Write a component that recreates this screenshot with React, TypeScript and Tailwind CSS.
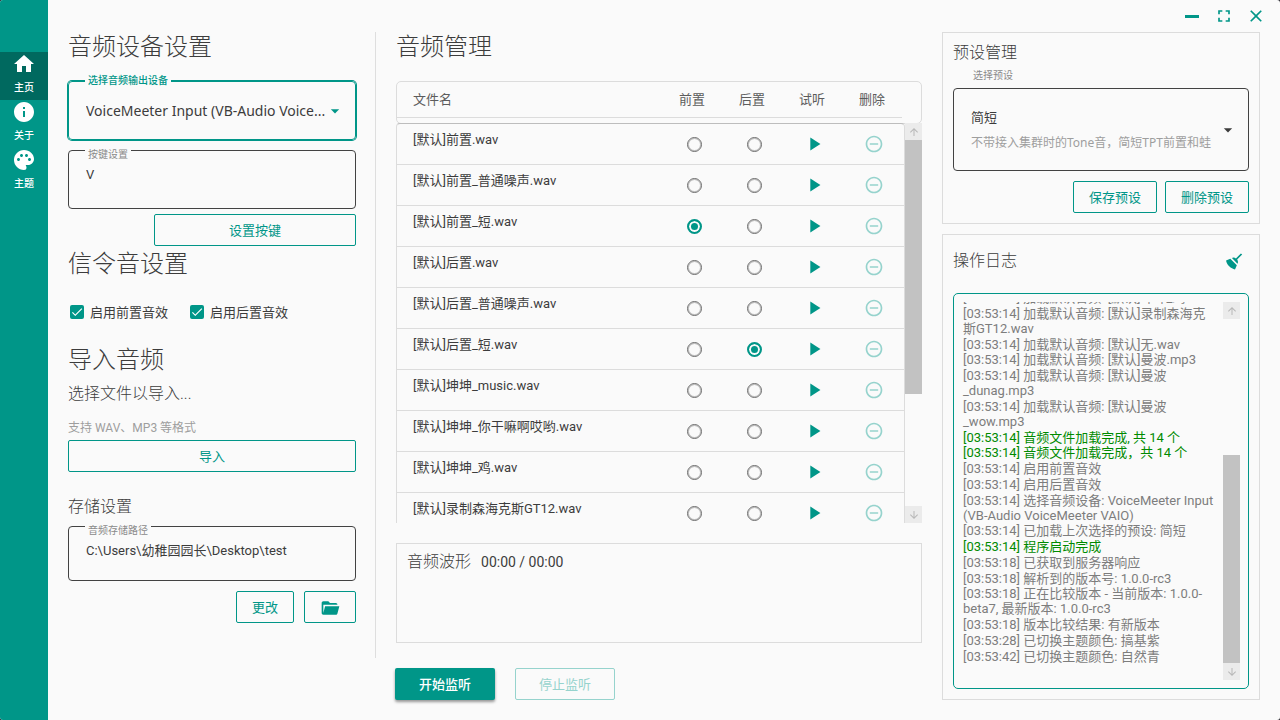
import React, { useState } from 'react';
import { MdArrowDropDown, MdArrowUpward, MdArrowDownward, MdCheck, MdClose, MdFullscreen, MdHome, MdInfo, MdPalette, MdPlayArrow, MdRemoveCircleOutline } from 'react-icons/md';

const navItems = [
  { id: 'home', label: '主页', icon: MdHome },
  { id: 'about', label: '关于', icon: MdInfo },
  { id: 'theme', label: '主题', icon: MdPalette },
];

const audioFiles = [
  '[默认]前置.wav',
  '[默认]前置_普通噪声.wav',
  '[默认]前置_短.wav',
  '[默认]后置.wav',
  '[默认]后置_普通噪声.wav',
  '[默认]后置_短.wav',
  '[默认]坤坤_music.wav',
  '[默认]坤坤_你干嘛啊哎哟.wav',
  '[默认]坤坤_鸡.wav',
  '[默认]录制森海克斯GT12.wav',
];

const logs = [
  { time: '03:53:14', text: '加载默认音频: [默认]坤坤_鸡.wav' },
  { time: '03:53:14', text: '加载默认音频: [默认]录制森海克斯GT12.wav' },
  { time: '03:53:14', text: '加载默认音频: [默认]无.wav' },
  { time: '03:53:14', text: '加载默认音频: [默认]曼波.mp3' },
  { time: '03:53:14', text: '加载默认音频: [默认]曼波 _dunag.mp3' },
  { time: '03:53:14', text: '加载默认音频: [默认]曼波 _wow.mp3' },
  { time: '03:53:14', text: '音频文件加载完成, 共 14 个', success: true },
  { time: '03:53:14', text: '音频文件加载完成，共 14 个', success: true },
  { time: '03:53:14', text: '启用前置音效' },
  { time: '03:53:14', text: '启用后置音效' },
  { time: '03:53:14', text: '选择音频设备: VoiceMeeter Input (VB-Audio VoiceMeeter VAIO)' },
  { time: '03:53:14', text: '已加载上次选择的预设: 简短' },
  { time: '03:53:14', text: '程序启动完成', success: true },
  { time: '03:53:18', text: '已获取到服务器响应' },
  { time: '03:53:18', text: '解析到的版本号: 1.0.0-rc3' },
  { time: '03:53:18', text: '正在比较版本 - 当前版本: 1.0.0-beta7, 最新版本: 1.0.0-rc3' },
  { time: '03:53:18', text: '版本比较结果: 有新版本' },
  { time: '03:53:28', text: '已切换主题颜色: 搞基紫' },
  { time: '03:53:42', text: '已切换主题颜色: 自然青' },
];

const outlineButton = 'flex h-8 items-center justify-center rounded-[2px] border border-[#009688] pt-[2px] text-[13px] text-[#009688]';

function SectionTitle({ children }: { children: React.ReactNode }) {
  return <h2 className="text-2xl leading-[30px] font-light">{children}</h2>;
}

// label that sits on the outline of a field
function FloatingLabel({ htmlFor, className, children }: { htmlFor: string; className: string; children: React.ReactNode }) {
  return (
    <label htmlFor={htmlFor} className={`absolute left-4 bg-[#fafafa] px-[3px] text-[10px] leading-3 ${className}`}>
      {children}
    </label>
  );
}

function Scrollbar({ before, thumb }: { before: string; thumb: string }) {
  return (
    <div className="flex w-[17px] shrink-0 flex-col">
      <button type="button" aria-label="向上滚动" className="flex h-[17px] shrink-0 items-center justify-center bg-[#ebebeb] text-[#b8b8b8]">
        <MdArrowUpward className="size-3" />
      </button>
      <div className={before} />
      <div className={`bg-[#c2c2c2] ${thumb}`} />
      <div className="flex-1" />
      <button type="button" aria-label="向下滚动" className="flex h-[17px] shrink-0 items-center justify-center bg-[#ebebeb] text-[#b8b8b8]">
        <MdArrowDownward className="size-3" />
      </button>
    </div>
  );
}

function Sidebar() {
  return (
    <nav className="w-12 shrink-0 bg-[#009688] pt-[52px]">
      {navItems.map(({ id, label, icon: Icon }) => (
        <button
          key={id}
          type="button"
          className={`flex h-12 w-full flex-col items-center justify-between pb-1 text-[10px] leading-4 font-medium text-white ${id === 'home' ? 'bg-[#00695f]' : ''}`}
        >
          <Icon className="size-6" />
          {label}
        </button>
      ))}
    </nav>
  );
}

function TickBox({ label }: { label: string }) {
  const [on, setOn] = useState(true);
  return (
    <label className="flex w-[120px] items-center gap-[6px] text-[13px] leading-5">
      <span className="grid size-[14px] place-items-center">
        <input
          type="checkbox"
          checked={on}
          onChange={() => setOn(!on)}
          className="col-start-1 row-start-1 size-[14px] appearance-none rounded-[2px] border-2 border-[#757575] checked:border-[#009688] checked:bg-[#009688]"
        />
        {on && <MdCheck className="pointer-events-none col-start-1 row-start-1 size-[14px] text-white" />}
      </span>
      <span className="pt-[3px]">{label}</span>
    </label>
  );
}

function SettingsColumn() {
  return (
    <section className="flex h-[626px] w-[308px] shrink-0 flex-col border-r border-[#dedede] pr-[19px]">
      <SectionTitle>音频设备设置</SectionTitle>

      <div className="relative mt-[19px] grid h-[59px] items-center rounded-[4px] border border-[#009688] ring-1 ring-[#009688]">
        <FloatingLabel htmlFor="device" className="-top-[7px] font-medium text-[#009688]">选择音频输出设备</FloatingLabel>
        <select id="device" className="col-start-1 row-start-1 h-full w-full appearance-none bg-transparent pr-6 pl-[17px] font-['Noto_Sans','Noto_Sans_CJK_SC',sans-serif] text-sm outline-none">
          <option>VoiceMeeter Input (VB-Audio Voice...</option>
        </select>
        <MdArrowDropDown className="pointer-events-none col-start-1 row-start-1 mr-[10px] size-5 justify-self-end text-[#009688]" />
      </div>

      <div className="relative mt-[10px] h-[59px] rounded-[4px] border border-[#424242]">
        <FloatingLabel htmlFor="hotkey" className="-top-[2px] text-[#8a8a8a]">按键设置</FloatingLabel>
        <input id="hotkey" defaultValue="V" className="h-[47px] w-full bg-transparent px-[17px] text-[13px] outline-none" />
      </div>
      <button type="button" className={`${outlineButton} mt-[5px] w-[202px] self-end`}>设置按键</button>

      <div className="mt-[3px]">
        <SectionTitle>信令音设置</SectionTitle>
      </div>
      <div className="mt-[21px] flex pl-[2px]">
        <TickBox label="启用前置音效" />
        <TickBox label="启用后置音效" />
      </div>

      <div className="mt-[22px]">
        <SectionTitle>导入音频</SectionTitle>
      </div>
      <p className="mt-[7px] leading-6 font-light">选择文件以导入...</p>
      <p className="mt-[14px] text-xs text-[#9e9e9e]">支持 WAV、MP3 等格式</p>
      <button type="button" className={`${outlineButton} mt-1`}>导入</button>

      <h3 className="mt-[23px] leading-6 font-light">存储设置</h3>
      <div className="relative mt-[7px] h-[55px] rounded-[4px] border border-[#424242]">
        <FloatingLabel htmlFor="path" className="-top-[2px] text-[#8a8a8a]">音频存储路径</FloatingLabel>
        <input id="path" defaultValue="C:\Users\幼稚园园长\Desktop\test" className="h-[45px] w-full bg-transparent px-[17px] text-[13px] outline-none" />
      </div>
      <div className="mt-[10px] flex justify-end gap-[10px]">
        <button type="button" className={`${outlineButton} w-[58px]`}>更改</button>
        <button type="button" aria-label="打开文件夹" className={`${outlineButton} w-[52px]`}>
          <svg viewBox="0 0 24 24" className="size-5" fill="currentColor">
            <path d="M19,20H4C2.89,20 2,19.1 2,18V6C2,4.89 2.89,4 4,4H10L12,6H19A2,2 0 0,1 21,8H21L4,8V18L6.14,10H23.21L20.93,18.5C20.7,19.37 19.92,20 19,20Z" />
          </svg>
        </button>
      </div>
    </section>
  );
}

function AudioTable() {
  const [prefix, setPrefix] = useState(2);
  const [suffix, setSuffix] = useState(5);
  const radio = 'size-[15px] appearance-none rounded-full border border-[#6b6b6b] shadow-[inset_0_0_0_1px_#bdbdbd] checked:border-2 checked:border-[#009688] checked:bg-[#009688] checked:shadow-[inset_0_0_0_2px_#fafafa]';
  const cols = 'grid grid-cols-[1fr_60px_60px_60px_60px]';

  return (
    <div className="mt-[19px]">
      <table className="block">
        <thead className="block h-[43px] rounded-[5px] border border-[#dcdcdc]">
          <tr className={`${cols} mr-[19px] h-9 items-center border-b border-[#dcdcdc] text-[13px] text-[#5c5c5c]`}>
            <th className="pl-4 text-left font-normal">文件名</th>
            <th className="font-normal">前置</th>
            <th className="font-normal">后置</th>
            <th className="font-normal">试听</th>
            <th className="font-normal">删除</th>
          </tr>
        </thead>
        <tbody className="-mt-px grid h-[400px] grid-cols-[1fr_17px] overflow-hidden">
          <tr className="contents">
            <td className="h-[400px] overflow-hidden p-0">
              <table className="block rounded-t-[4px] border border-[#dcdcdc] border-t-[#bdbdbd]">
                <tbody className="block">
                  {audioFiles.map((name, i) => (
                    <tr key={name} className={`${cols} h-[41px] border-b border-[#dcdcdc] text-[13px]`}>
                      <td className="pt-[6px] pl-4 leading-5">{name}</td>
                      <td className="flex items-center justify-center">
                        <input type="radio" name="prefix" aria-label={`${name} 前置`} checked={prefix === i} onChange={() => setPrefix(i)} className={radio} />
                      </td>
                      <td className="flex items-center justify-center">
                        <input type="radio" name="suffix" aria-label={`${name} 后置`} checked={suffix === i} onChange={() => setSuffix(i)} className={radio} />
                      </td>
                      <td className="flex items-center justify-center">
                        <button type="button" aria-label="试听" className="text-[#009688]">
                          <MdPlayArrow className="size-[22px]" />
                        </button>
                      </td>
                      <td className="flex items-center justify-center">
                        <button type="button" aria-label="删除" className="text-[#96d3cd]">
                          <MdRemoveCircleOutline className="size-5" />
                        </button>
                      </td>
                    </tr>
                  ))}
                </tbody>
              </table>
            </td>
            <td className="flex p-0">
              <Scrollbar before="h-0" thumb="h-[254px]" />
            </td>
          </tr>
        </tbody>
      </table>
    </div>
  );
}

function AudioColumn() {
  return (
    <section className="min-w-0 flex-1">
      <SectionTitle>音频管理</SectionTitle>
      <AudioTable />
      <div className="mt-5 flex h-[100px] items-start gap-[10px] border border-[#dcdcdc] px-[10px] pt-[6px]">
        <h3 className="leading-6 font-light">音频波形</h3>
        <span className="text-sm leading-6">00:00 / 00:00</span>
      </div>
      <div className="mt-[25px] flex gap-5">
        <button type="button" className="-ml-px h-8 w-[100px] rounded-[2px] bg-[#009688] pt-[2px] text-[13px] font-medium text-white shadow-[0_2px_3px_rgba(0,0,0,0.4)]">开始监听</button>
        <button type="button" disabled className="h-8 w-[100px] rounded-[2px] border border-[#96d3cd] pt-[2px] text-[13px] text-[#96d3cd]">停止监听</button>
      </div>
    </section>
  );
}

function PresetCard() {
  return (
    <section className="border border-[#dcdcdc] px-[10px] pt-2 pb-[10px]">
      <h3 className="leading-6 font-light">预设管理</h3>
      <label htmlFor="preset" className="ml-5 block text-[10px] leading-[22px] text-[#8a8a8a]">选择预设</label>
      <div className="mt-px grid h-[83px] rounded-[4px] border border-[#424242]">
        <select id="preset" className="col-start-1 row-start-1 h-full w-full appearance-none bg-transparent pr-9 pb-6 pl-[17px] text-[13px] outline-none">
          <option>简短</option>
        </select>
        <p className="pointer-events-none col-start-1 row-start-1 mr-[34px] ml-[17px] self-end overflow-hidden pb-[17px] font-['Noto_Sans','Noto_Sans_CJK_SC',sans-serif] text-xs leading-5 whitespace-nowrap text-[#9e9e9e]">
          不带接入集群时的Tone音，简短TPT前置和蛙
        </p>
        <MdArrowDropDown className="pointer-events-none col-start-1 row-start-1 mr-[10px] size-5 self-center justify-self-end" />
      </div>
      <div className="mt-[10px] flex justify-end gap-2">
        <button type="button" className={`${outlineButton} w-[84px]`}>保存预设</button>
        <button type="button" className={`${outlineButton} w-[84px]`}>删除预设</button>
      </div>
    </section>
  );
}

function LogCard() {
  return (
    <section className="mt-[10px] flex flex-1 flex-col border border-[#dcdcdc] p-[10px]">
      <div className="flex h-8 items-center justify-between pr-1">
        <h3 className="leading-6 font-light">操作日志</h3>
        <button type="button" aria-label="清空日志" className="text-[#009688]">
          <svg viewBox="0 0 24 24" className="size-[21px]" fill="currentColor">
            <path d="M19.36,2.72L20.78,4.14L15.06,9.85C16.13,11.39 16.28,13.24 15.38,14.44L9.06,8.12C10.26,7.22 12.11,7.37 13.65,8.44L19.36,2.72M5.93,17.57C3.92,15.56 2.69,13.16 2.35,10.92L7.23,8.83L14.67,16.27L12.58,21.15C10.34,20.81 7.94,19.58 5.93,17.57Z" />
          </svg>
        </button>
      </div>
      <div className="mt-4 flex flex-1 rounded-[5px] border border-[#009688] p-2">
        <div className="flex min-w-0 flex-1 overflow-hidden">
          <ul className="-mt-3 mb-4 flex flex-1 flex-col justify-between pr-2 pl-px text-[13px] leading-[15px] text-[#7d7d7d]">
            {logs.map((log, i) => (
              <li key={i} className={log.success ? 'text-[#008a00]' : ''}>
                [{log.time}] {log.text}
              </li>
            ))}
          </ul>
        </div>
        <Scrollbar before="h-[136px]" thumb="h-[208px]" />
      </div>
    </section>
  );
}

export default function App() {
  return (
    <div className="bg-[#26262e]">
      <div className="flex min-h-screen overflow-hidden rounded-[3px] bg-[#fafafa] font-[Roboto,'Noto_Sans_CJK_SC',sans-serif] text-base text-[#3c3c3c]">
        <Sidebar />
        <div className="flex min-w-0 flex-1 flex-col pr-5 pb-5 pl-5">
          <header className="-mr-[6px] flex h-8 shrink-0 items-center justify-end gap-3 text-[#009688]">
            <button type="button" aria-label="最小化" className="flex size-5 items-center justify-center">
              <span className="h-[3px] w-[14px] bg-current" />
            </button>
            <button type="button" aria-label="最大化">
              <MdFullscreen className="size-5" />
            </button>
            <button type="button" aria-label="关闭">
              <MdClose className="size-5" />
            </button>
          </header>
          <main className="flex flex-1 gap-5">
            <SettingsColumn />
            <AudioColumn />
            <div className="flex w-[318px] shrink-0 flex-col">
              <PresetCard />
              <LogCard />
            </div>
          </main>
        </div>
      </div>
    </div>
  );
}
